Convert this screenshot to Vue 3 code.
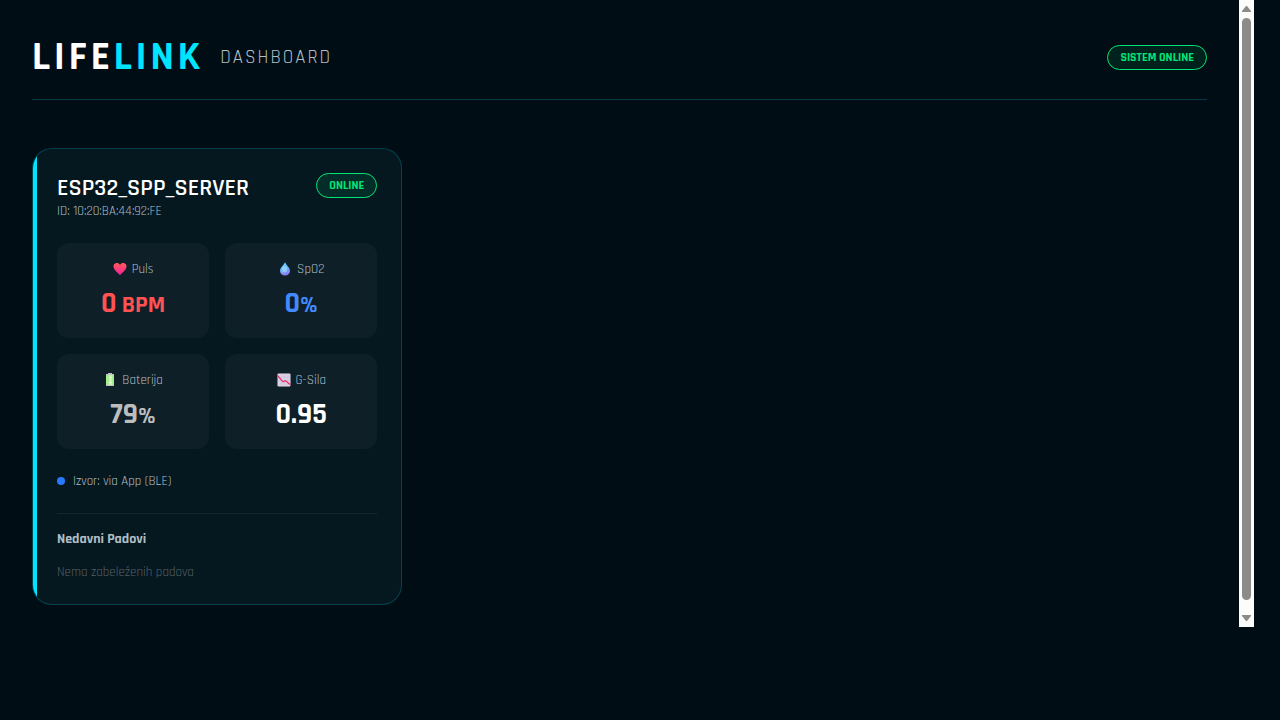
<script setup>
const device = {
  name: 'ESP32_SPP_SERVER',
  id: '10:20:BA:44:92:FE',
  status: 'ONLINE',
  source: 'via App (BLE)',
}

const metrics = [
  { key: 'pulse', label: 'Puls', value: '0', unit: ' BPM' },
  { key: 'oxygen', label: 'SpO2', value: '0', unit: '%' },
  { key: 'battery', label: 'Baterija', value: '79', unit: '%' },
  { key: 'force', label: 'G-Sila', value: '0.95', unit: '' },
]
</script>

<template>
  <div class="shell">
    <div class="page">
      <header class="header">
        <div class="brand">
          <h1 class="logo">LIFE<span class="accent">LINK</span></h1>
          <span class="subtitle">DASHBOARD</span>
        </div>
        <span class="badge">SISTEM ONLINE</span>
      </header>

      <main class="devices">
        <article class="card">
          <div class="card-head">
            <div>
              <h2 class="name">{{ device.name }}</h2>
              <p class="id">ID: {{ device.id }}</p>
            </div>
            <span class="badge">{{ device.status }}</span>
          </div>

          <div class="metrics">
            <section v-for="m in metrics" :key="m.key" class="metric" :class="m.key">
              <h3 class="label">
                <svg v-if="m.key === 'pulse'" class="icon" viewBox="0 0 14 14" aria-hidden="true">
                  <defs>
                    <linearGradient id="heart" x1="0" y1="0" x2="0" y2="1">
                      <stop offset="0" stop-color="#ff5a5a" />
                      <stop offset="1" stop-color="#f5209a" />
                    </linearGradient>
                  </defs>
                  <path fill="url(#heart)" d="M7 3C5.8.5 2.2.4.9 2.6-.8 6.2 3.2 9.9 7 13c3.8-3.1 7.8-6.8 6.1-10.4C11.8.4 8.2.5 7 3z" />
                </svg>
                <svg v-else-if="m.key === 'oxygen'" class="icon" viewBox="0 0 14 14" aria-hidden="true">
                  <defs>
                    <linearGradient id="drop" x1="0" y1="0" x2=".3" y2="1">
                      <stop offset="0" stop-color="#6fe0f8" />
                      <stop offset=".55" stop-color="#6cb8fb" />
                      <stop offset="1" stop-color="#8c7cf5" />
                    </linearGradient>
                  </defs>
                  <path fill="url(#drop)" d="M7 .3C8.3 3.3 12 5.7 12 9a5 4.500 0 0 1-10 0C2 5.7 5.7 3.3 7 .3z" />
                  <ellipse cx="6.500" cy="7.500" rx="2.500" ry="3" fill="#a5e3ff" opacity=".6" />
                </svg>
                <svg v-else-if="m.key === 'battery'" class="icon" viewBox="0 0 14 14" aria-hidden="true">
                  <path fill="#c8bdd0" d="M5 0h4v1h2v1H3V1h2z" />
                  <path fill="#a5ec92" d="M3 2h8v10H3z" />
                  <path fill="#c9f4ac" d="M6 2h3v10H6z" />
                  <path fill="#c8bdd0" d="M3 12h8v1H3z" />
                  <path fill="#fff" d="M7 4h1v1H7zM6 9h2v1H6z" />
                </svg>
                <svg v-else class="icon" viewBox="0 0 14 14" aria-hidden="true">
                  <rect x=".5" y=".5" width="13" height="13" rx="1" fill="#ddd3e8" />
                  <path stroke="#c3b8d1" stroke-width=".5" d="M4 .5v13M7.500.5v13M11 .5v13M.5 4h13M.5 7.500h13M.5 11h13" />
                  <path fill="none" stroke="#f02c68" stroke-width="1.2" d="M.5 2.500 6 8.8l2.500-1 5 4" />
                </svg>
                <span>{{ m.label }}</span>
              </h3>
              <p class="value">{{ m.value }}<small v-if="m.unit" class="unit">{{ m.unit }}</small></p>
            </section>
          </div>

          <p class="source"><span class="dot"></span>Izvor: {{ device.source }}</p>

          <section class="falls">
            <h3 class="falls-title">Nedavni Padovi</h3>
            <p class="empty">Nema zabeleženih padova</p>
          </section>
        </article>
      </main>
    </div>

    <div class="scrollbar" aria-hidden="true">
      <svg class="arrow" viewBox="0 0 15 18"><path d="M7 6h1l4 5v1H3v-1z" /></svg>
      <div class="thumb"></div>
      <svg class="arrow down" viewBox="0 0 15 27"><path d="M3 15h9v1l-4 5H7l-4-5z" /></svg>
    </div>
  </div>
</template>

<style>
body {
  margin: 0;
  background: #000d14;
}
</style>

<style scoped>
.shell {
  display: flex;
  align-items: flex-start;
  min-height: 100vh;
  padding-right: 26px;
  box-sizing: border-box;
  color: #fff;
  font-family: Rajdhani, Roboto, sans-serif;
}

h1, h2, h3, p {
  margin: 0;
  font-weight: 400;
}

.page {
  flex: 1;
  min-width: 0;
  padding: 32px;
}

.header {
  display: flex;
  align-items: center;
  justify-content: space-between;
  padding-bottom: 16px;
  margin-bottom: 48px;
  border-bottom: 1px solid rgba(0, 229, 255, 0.2);
}

.brand {
  display: flex;
  align-items: center;
  gap: 16px;
}

.logo {
  font-size: 40px;
  font-weight: 700;
  line-height: 51px;
  letter-spacing: 4px;
}

.accent {
  color: #00e5ff;
}

.subtitle {
  color: #b0bec5;
  font-size: 19px;
  font-weight: 400;
  letter-spacing: 2px;
}

.badge {
  padding: 4px 12px;
  border: 1px solid #00e676;
  border-radius: 20px;
  background: rgba(0, 230, 118, 0.1);
  color: #00e676;
  font-size: 12px;
  font-weight: 700;
  line-height: 15px;
  white-space: nowrap;
}

.devices {
  display: grid;
  grid-template-columns: repeat(auto-fill, minmax(350px, 1fr));
  gap: 32px;
}

.card {
  position: relative;
  overflow: hidden;
  padding: 24px;
  border: 1px solid rgba(0, 229, 255, 0.2);
  border-radius: 20px;
  background: #051820;
}

.card::before {
  content: "";
  position: absolute;
  top: 0;
  bottom: 0;
  left: 0;
  width: 4px;
  background: #00e5ff;
}

.card-head {
  display: flex;
  align-items: flex-start;
  justify-content: space-between;
  margin-bottom: 24px;
}

.name {
  font-size: 24px;
  font-weight: 600;
  line-height: 30px;
}

.id {
  color: #b0bec5;
  font-size: 13px;
  line-height: 16px;
}

.metrics {
  display: grid;
  grid-template-columns: 1fr 1fr;
  gap: 16px;
}

.metric {
  padding: 16px;
  border-radius: 12px;
  background: #0e1f28;
  text-align: center;
}

.label {
  display: flex;
  align-items: center;
  justify-content: center;
  gap: 5px;
  margin-bottom: 6px;
  color: #b0bec5;
  font-size: 13px;
  line-height: 20px;
}

.icon {
  width: 14px;
  height: 14px;
}

.value {
  font-size: 29px;
  font-weight: 700;
  line-height: 37px;
}

.unit {
  font-size: 24px;
  line-height: 1;
  white-space: pre;
}

.pulse .value { color: #ff5252; }
.oxygen .value { color: #448aff; }
.battery .value { color: #bdbdbd; }

.source {
  display: flex;
  align-items: center;
  gap: 8px;
  margin-top: 24px;
  color: #b0bec5;
  font-size: 13px;
  line-height: 16px;
}

.dot {
  width: 8px;
  height: 8px;
  border-radius: 50%;
  background: #2979ff;
}

.falls {
  margin-top: 24px;
  padding-top: 16px;
  border-top: 1px solid rgba(255, 255, 255, 0.06);
}

.falls-title {
  margin-bottom: 16px;
  color: #b0bec5;
  font-size: 14px;
  font-weight: 700;
  line-height: 18px;
}

.empty {
  color: #555f66;
  font-size: 13px;
  line-height: 16px;
}

.scrollbar {
  display: flex;
  flex-direction: column;
  width: 15px;
  height: calc(100vh - 93px);
  background: #fcfcfc;
}

.arrow {
  display: block;
  height: 18px;
  fill: #8b8b8b;
}

.arrow.down {
  height: 27px;
}

.thumb {
  flex: 1;
  margin: 0 3px;
  border-radius: 5px;
  background: #8b8b8b;
}
</style>
